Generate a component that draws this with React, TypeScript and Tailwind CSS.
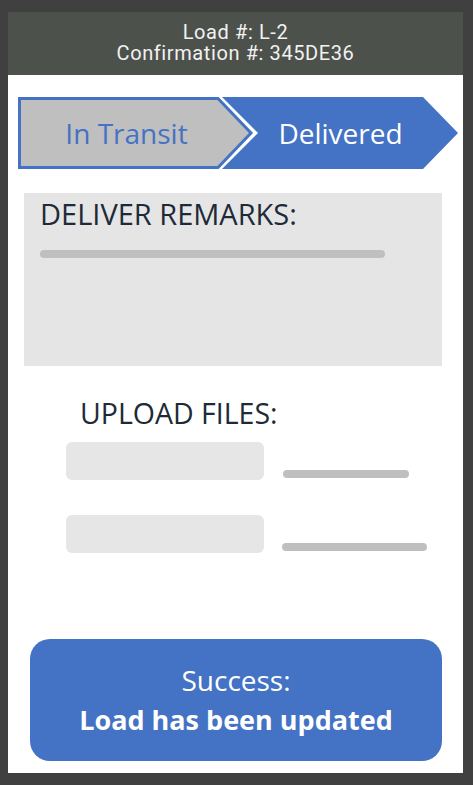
const BLUE = "#4472c4";

function Stepper() {
  return (
    <div className="relative ml-[10px] mt-[22px] h-[72px] w-[440px]">
      <svg className="absolute inset-0" width="440" height="72" viewBox="0 0 440 72">
        <polygon
          points="1.5,1.5 200,1.5 233,36 200,70.5 1.5,70.5"
          fill="#bfbfbf"
          stroke={BLUE}
          strokeWidth="3"
        />
        <polygon points="204,0 405,0 440,36 405,72 204,72 240,36" fill={BLUE} />
      </svg>
      <div className="relative flex h-full items-center font-['Open_Sans',sans-serif] text-[28px] leading-[28px]">
        <span className="w-[217px] text-center text-[#4472c4]">In Transit</span>
        <span className="w-[211px] text-center text-white">Delivered</span>
      </div>
    </div>
  );
}

function UploadRow({ barWidth, barGap, top }: { barWidth: number; barGap: string; top: string }) {
  return (
    <div className={`flex items-end pl-[58px] ${top}`}>
      <div className="h-[38px] w-[198px] rounded-md bg-[#e6e6e6]" />
      <div
        className={`mb-[2px] h-[8px] rounded-sm bg-[#bfbfbf] ${barGap}`}
        style={{ width: barWidth }}
      />
    </div>
  );
}

export default function App() {
  return (
    <div className="flex h-[785px] w-[473px] flex-col bg-[#404040] pb-[12px] pl-[8px] pr-[10px] pt-[12px]">
      <div className="flex h-[63px] flex-col items-center bg-[#4c514b] pt-[10px] font-['Roboto',sans-serif] text-[20px] leading-[21px] tracking-[0.6px] text-[#f2f2f2]">
        <div>Load #: L-2</div>
        <div>Confirmation #: 345DE36</div>
      </div>

      <div className="flex flex-1 flex-col bg-white font-['Open_Sans',sans-serif]">
        <Stepper />

        <div className="ml-[16px] mt-[24px] h-[173px] w-[418px] bg-[#e5e5e5] pl-[16px] pt-[7px]">
          <div className="text-[29px] leading-[28px] text-[#1e2a38]">DELIVER REMARKS:</div>
          <div className="mt-[22px] h-[8px] w-[345px] rounded-sm bg-[#bfbfbf]" />
        </div>

        <div className="mt-[33px] pl-[72px] text-[28.5px] leading-[28px] text-[#1e2a38]">
          UPLOAD FILES:
        </div>
        <UploadRow barWidth={126} barGap="ml-[19px]" top="mt-[15px]" />
        <UploadRow barWidth={145} barGap="ml-[18px]" top="mt-[35px]" />

        <div className="mb-[12px] ml-[22px] mt-auto flex h-[122px] w-[412px] flex-col items-center justify-center rounded-[20px] bg-[#4472c4] text-[28px] leading-[39px] text-white">
          <div>Success:</div>
          <div className="text-[27px] font-bold">Load has been updated</div>
        </div>
      </div>
    </div>
  );
}
